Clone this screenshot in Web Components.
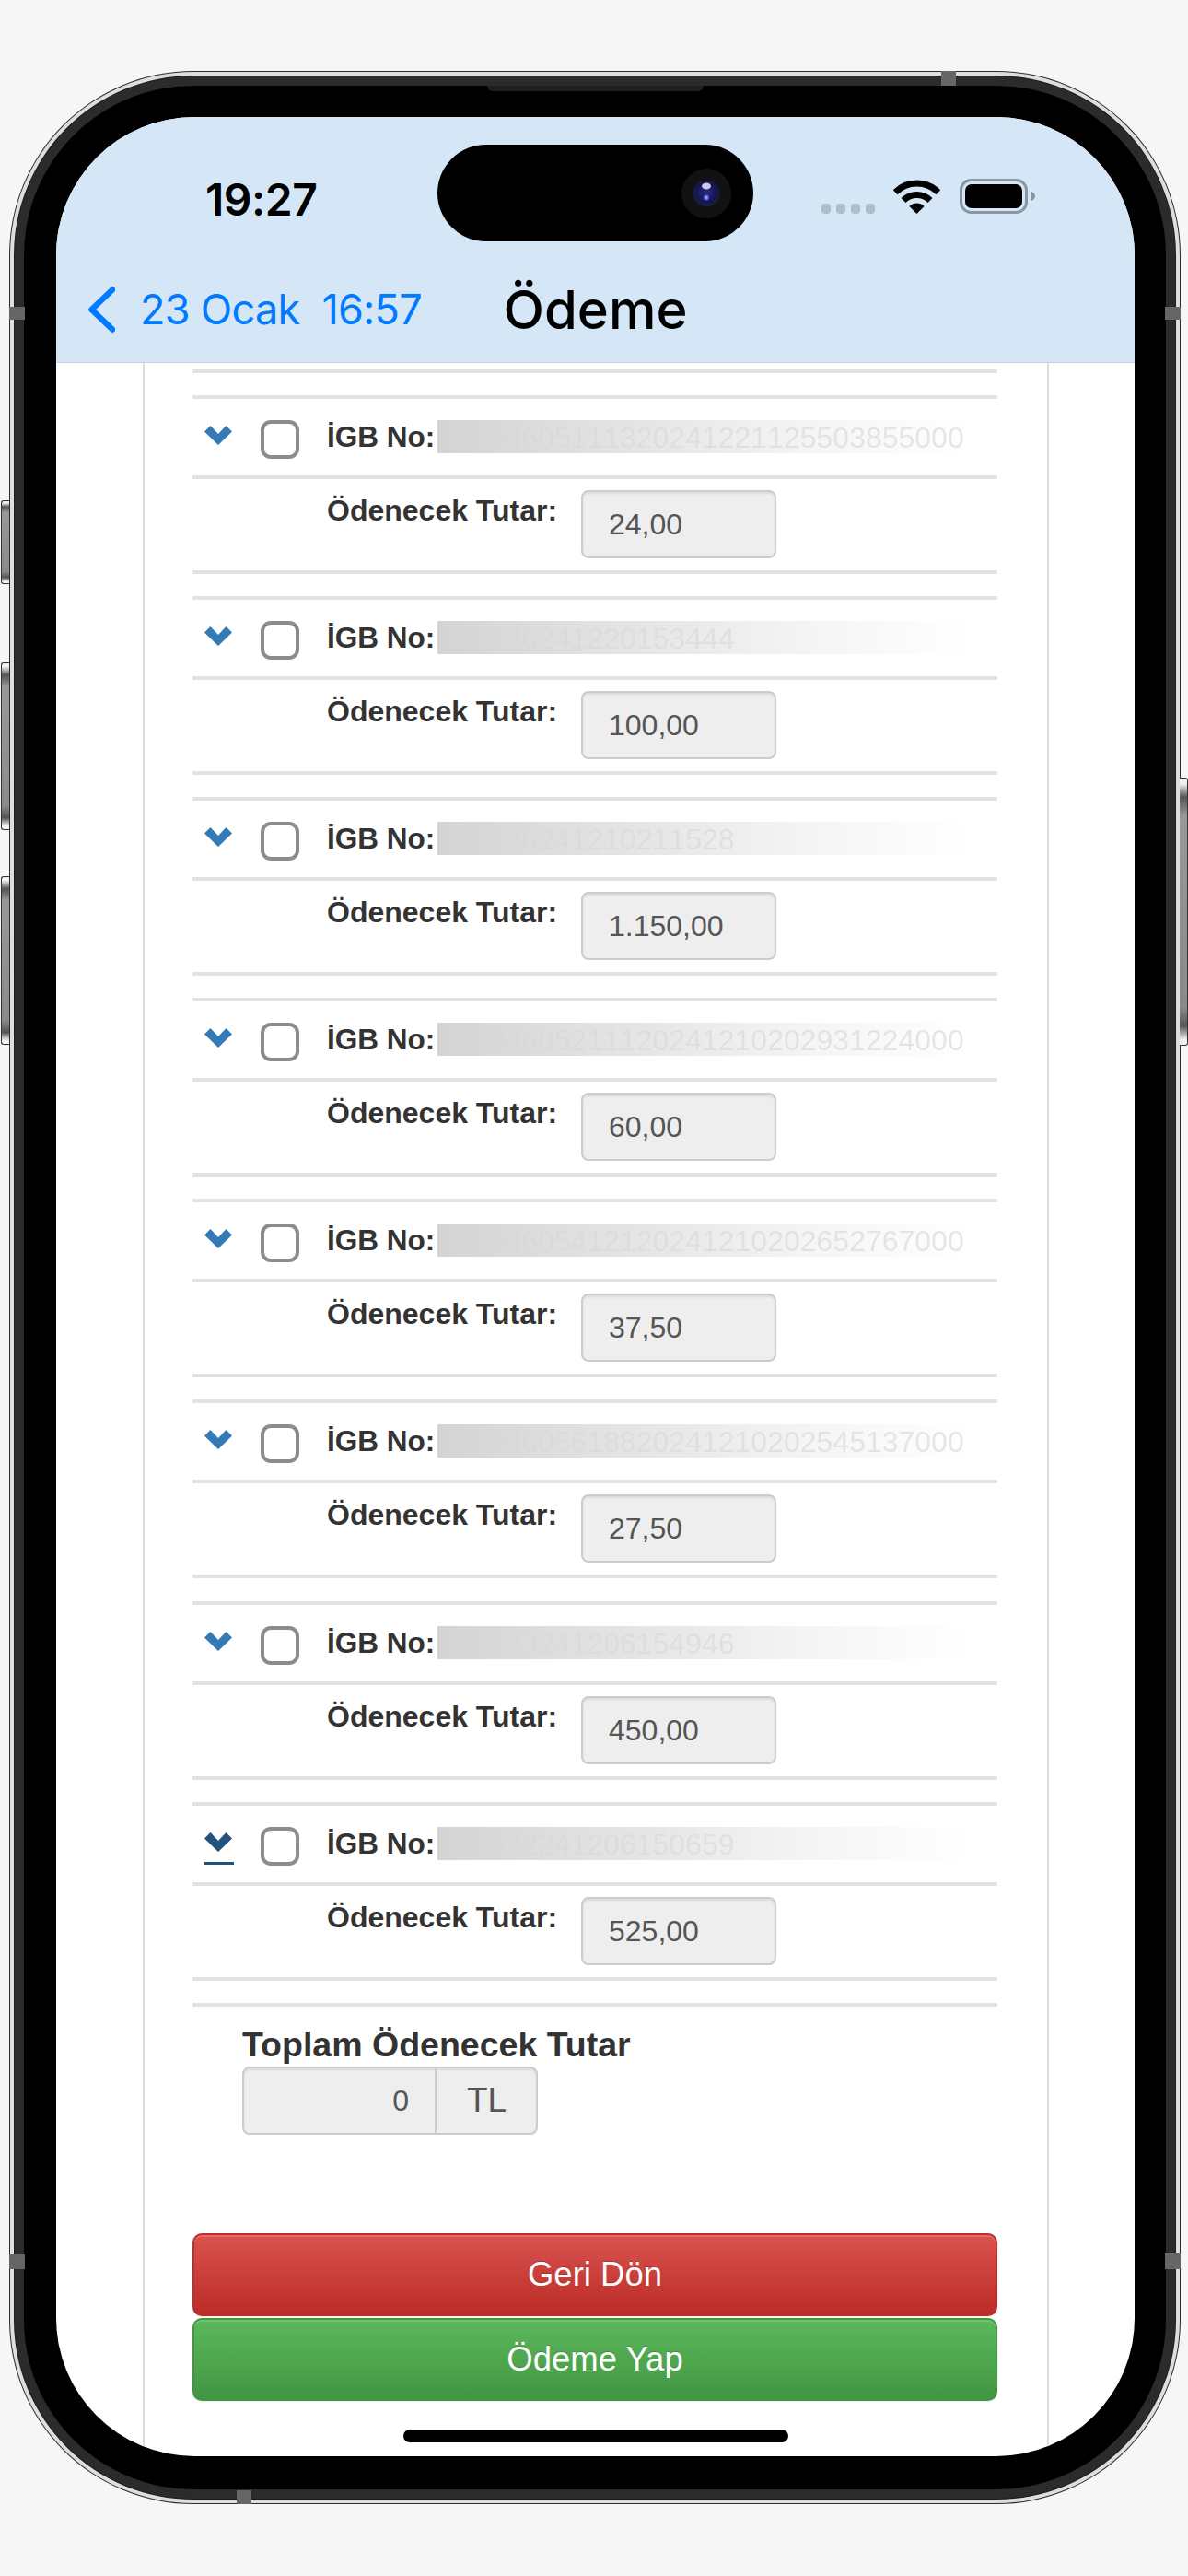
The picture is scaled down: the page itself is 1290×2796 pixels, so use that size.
<!DOCTYPE html>
<html lang="tr">
<head>
<meta charset="utf-8">
<title>Ödeme</title>
<style>
    html, body { margin: 0; padding: 0; background: #f6f6f6; }
    body { font-family: "Liberation Sans", Arial, sans-serif; }
</style>
</head>
<body>

<phone-frame>
    <status-bar slot="header" time="19:27"></status-bar>
    <nav-bar slot="header" back="23 Ocak  16:57" title="Ödeme"></nav-bar>
    <payment-sheet>
        <payment-row igb="0604605111320241221125503855000" amount="24,00"></payment-row>
        <payment-row igb="60126241220153444" amount="100,00"></payment-row>
        <payment-row igb="61426241210211528" amount="1.150,00"></payment-row>
        <payment-row igb="0604605211120241210202931224000" amount="60,00"></payment-row>
        <payment-row igb="0604605412120241210202652767000" amount="37,50"></payment-row>
        <payment-row igb="0604605618820241210202545137000" amount="27,50"></payment-row>
        <payment-row igb="60223241206154946" amount="450,00"></payment-row>
        <payment-row igb="60622241206150659" amount="525,00" active></payment-row>
        <total-box label="Toplam Ödenecek Tutar" value="0" unit="TL"></total-box>
        <action-button kind="danger">Geri Dön</action-button>
        <action-button kind="success">Ödeme Yap</action-button>
    </payment-sheet>
</phone-frame>

<script>
class phoneFrame extends HTMLElement
{
    constructor()
    {
        super();
        this.shadowDOM = this.attachShadow({mode:"open"});
    }

    connectedCallback()
    {
        this.render();
    }

    render()
    {
        this.shadowDOM.innerHTML =
        `
        <style>
            :host
            {
                display         : block;
                position        : relative;
                width           : 1272px;
                height          : 2641px;
                margin          : 77px 0 0 10px;
            }

            .outer
            {
                height          : 100%;
                box-sizing      : border-box;
                padding         : 1px;
                background      : #2c2c2c;
                border-radius   : 200px;
            }

            .silver
            {
                height          : 100%;
                box-sizing      : border-box;
                padding         : 5px;
                background      : #dedede;
                border-radius   : 199px;
            }

            .metal
            {
                height          : 100%;
                box-sizing      : border-box;
                padding         : 10px;
                background      : #2b2b2b;
                border-radius   : 194px;
                box-shadow      : 0 0 0 1px #1c1c1c;
            }

            .bezel
            {
                height          : 100%;
                box-sizing      : border-box;
                padding         : 34px 34px 36px 35px;
                background      : #000;
                border-radius   : 184px;
            }

            .screen
            {
                height          : 100%;
                position        : relative;
                display         : flex;
                flex-direction  : column;
                overflow        : hidden;
                background      : #fff;
                border-radius   : 150px;
            }

            .header
            {
                display         : block;
                flex            : none;
                height          : 267px;
                background      : #d5e6f6;
                border-bottom   : 1px solid #c3d0dc;
                box-sizing      : border-box;
            }

            .content
            {
                flex            : 1;
                min-height      : 0;
                overflow        : hidden;
            }

            .home
            {
                position        : absolute;
                left            : 377px;
                bottom          : 15px;
                width           : 418px;
                height          : 14px;
                background      : #000;
                border-radius   : 7px;
            }

            .side
            {
                position        : absolute;
                box-sizing      : border-box;
                width           : 9px;
                border          : 1px solid #333;
                background      : linear-gradient(180deg, #f0f0f0 0, #f0f0f0 2%, #555 7%, #999 14%, #8a8a8a 86%, #555 93%, #f0f0f0 98%, #f0f0f0 100%);
            }

            .side.left  { left: -9px; border-right: 0; border-radius: 3px 0 0 3px; }
            .side.right { right: -8px; border-left: 0; border-radius: 0 3px 3px 0; }

            .band
            {
                position        : absolute;
                background      : #666;
            }

            .speaker
            {
                position        : absolute;
                left            : 519px;
                top             : 16px;
                width           : 235px;
                height          : 6px;
                background      : #202020;
                border-radius   : 0 0 6px 6px;
            }
        </style>

        <div class="side left" style="top:466px;height:91px"></div>
        <div class="side left" style="top:642px;height:182px"></div>
        <div class="side left" style="top:874px;height:183px"></div>
        <div class="side right" style="top:767px;height:291px"></div>

        <div class="outer"><div class="silver"><div class="metal"><div class="bezel">
            <div class="screen">
                <div class="header"><slot name="header"></slot></div>
                <div class="content"><slot></slot></div>
                <div class="home"></div>
            </div>
        </div></div></div></div>

        <div class="speaker"></div>
        <div class="band" style="left:1012px;top:0;width:16px;height:16px"></div>
        <div class="band" style="left:0;top:256px;width:17px;height:14px"></div>
        <div class="band" style="right:0;top:256px;width:17px;height:14px"></div>
        <div class="band" style="left:0;top:2370px;width:17px;height:16px"></div>
        <div class="band" style="right:0;top:2368px;width:17px;height:18px"></div>
        <div class="band" style="left:247px;bottom:0;width:16px;height:15px"></div>
        `
    }
}

class statusBar extends HTMLElement
{
    constructor()
    {
        super();
        this.shadowDOM = this.attachShadow({mode:"open"});
    }

    connectedCallback()
    {
        this.render();
    }

    render()
    {
        this.shadowDOM.innerHTML =
        `
        <style>
            :host
            {
                display         : flex;
                position        : relative;
                justify-content : space-between;
                align-items     : flex-start;
                height          : 163px;
                box-sizing      : border-box;
                padding         : 0 108px 0 162px;
            }

            .time
            {
                margin-top      : 61px;
                font            : 600 48px/58px Inter, "Liberation Sans", sans-serif;
                letter-spacing  : -0.5px;
                color           : #000;
            }

            .icons
            {
                display         : flex;
                align-items     : flex-end;
                margin-top      : 67px;
            }

            .dots
            {
                display         : flex;
                gap             : 6px;
                margin-right    : 20px;
            }

            .dots i
            {
                width           : 10px;
                height          : 11px;
                background      : #aebdca;
                border-radius   : 4px;
            }

            .wifi
            {
                display         : block;
                margin-right    : 21px;
            }

            .battery
            {
                display         : block;
            }

            .island
            {
                position        : absolute;
                left            : 414px;
                top             : 30px;
                width           : 343px;
                height          : 105px;
                background      : #000;
                border-radius   : 53px;
            }

            .island svg
            {
                position        : absolute;
                left            : 264px;
                top             : 25px;
            }
        </style>

        <span class="time">${this.getAttribute("time")}</span>

        <div class="island">
            <svg width="56" height="56" viewBox="0 0 56 56">
                <defs>
                    <radialGradient id="lens" cx="50%" cy="45%" r="55%">
                        <stop offset="0" stop-color="#2a2a8c"/>
                        <stop offset="0.7" stop-color="#15154f"/>
                        <stop offset="1" stop-color="#1a2340"/>
                    </radialGradient>
                </defs>
                <circle cx="28" cy="28" r="27" fill="#101214"/>
                <ellipse cx="28" cy="28" rx="14.5" ry="14" fill="url(#lens)"/>
                <ellipse cx="28" cy="20" rx="5" ry="3.5" fill="#cfc6e8"/>
                <circle cx="28" cy="32.5" r="3" fill="#6a58d8"/>
                <circle cx="28" cy="32.5" r="1.4" fill="#58c8e0"/>
            </svg>
        </div>

        <div class="icons">
            <div class="dots"><i></i><i></i><i></i><i></i></div>
            <svg class="wifi" width="51" height="37" viewBox="0 0 51 37">
                <path d="M2.2 13.7A33 33 0 0 1 48.8 13.7" fill="none" stroke="#000" stroke-width="7"/>
                <path d="M11 22.5A20.5 20.5 0 0 1 40 22.5" fill="none" stroke="#000" stroke-width="7"/>
                <path d="M25.5 37L17.4 28.9A11.5 11.5 0 0 1 33.6 28.9Z" fill="#000"/>
            </svg>
            <svg class="battery" width="82" height="38" viewBox="0 0 82 38">
                <rect x="1.5" y="1.5" width="71" height="35" rx="11" fill="none" stroke="#8a96a2" stroke-width="3"/>
                <rect x="6" y="6" width="62" height="26" rx="7" fill="#000"/>
                <path d="M77 13.5C80 14.5 82 16.5 82 19C82 21.5 80 23.5 77 24.5Z" fill="#8a96a2"/>
            </svg>
        </div>
        `
    }
}

class navBar extends HTMLElement
{
    constructor()
    {
        super();
        this.shadowDOM = this.attachShadow({mode:"open"});
    }

    connectedCallback()
    {
        this.render();
    }

    render()
    {
        this.shadowDOM.innerHTML =
        `
        <style>
            :host
            {
                display         : grid;
                grid-template-columns : 1fr auto 1fr;
                align-items     : center;
                height          : 103px;
                box-sizing      : border-box;
                padding         : 0 35px 12px 35px;
                font-family     : Inter, "Liberation Sans", sans-serif;
            }

            .back
            {
                display         : flex;
                align-items     : center;
                gap             : 27px;
                color           : #007aff;
                font-size       : 45px;
                line-height     : 56px;
                white-space     : pre;
                letter-spacing  : -0.7px;
            }

            .back svg
            {
                display         : block;
                flex            : none;
            }

            .title
            {
                color           : #000;
                font-size       : 58px;
                font-weight     : 500;
                line-height     : 64px;
            }
        </style>

        <div class="back">
            <svg width="29" height="50" viewBox="0 0 29 50">
                <path d="M26 3.5L3.5 25L26 46.5" fill="none" stroke="#007aff" stroke-width="6.5" stroke-linecap="round" stroke-linejoin="round"/>
            </svg><span>${this.getAttribute("back")}</span>
        </div>
        <div class="title">${this.getAttribute("title")}</div>
        <div></div>
        `
    }
}

class paymentSheet extends HTMLElement
{
    constructor()
    {
        super();
        this.shadowDOM = this.attachShadow({mode:"open"});
    }

    connectedCallback()
    {
        this.render();
    }

    render()
    {
        this.shadowDOM.innerHTML =
        `
        <style>
            :host
            {
                display         : block;
                height          : 100%;
                box-sizing      : border-box;
                margin          : 0 93px 0 94px;
                padding         : 7px 54px 0 52px;
                border-left     : 2px solid #dedede;
                border-right    : 2px solid #dedede;
                color           : #333;
                font-family     : "Liberation Sans", Arial, sans-serif;
            }

            .line
            {
                height          : 4px;
                margin-bottom   : 24px;
                background      : #e2e2e2;
            }
        </style>

        <div class="line"></div>
        <slot></slot>
        `
    }
}

class paymentRow extends HTMLElement
{
    constructor()
    {
        super();
        this.shadowDOM = this.attachShadow({mode:"open"});
    }

    connectedCallback()
    {
        this.render();
    }

    render()
    {
        this.shadowDOM.innerHTML =
        `
        <style>
            :host
            {
                display         : block;
                margin-bottom   : 24.1px;
                border-top      : 4px solid #e2e2e2;
                border-bottom   : 4px solid #e2e2e2;
            }

            .head
            {
                display         : flex;
                align-items     : flex-start;
                height          : 87px;
                box-sizing      : border-box;
                padding         : 23px 0 0 13px;
                border-bottom   : 4px solid #e2e2e2;
            }

            .toggle
            {
                display         : block;
                flex            : none;
                width           : 32px;
                height          : 33px;
                margin-top      : 6px;
                margin-right    : 29px;
            }

            .toggle svg
            {
                display         : block;
                fill            : #337ab7;
            }

            :host([active]) .toggle
            {
                height          : 32px;
                border-bottom   : 3px solid #23527c;
            }

            :host([active]) .toggle svg
            {
                fill            : #23527c;
            }

            .box
            {
                flex            : none;
                box-sizing      : border-box;
                width           : 42px;
                height          : 42px;
                margin-right    : 30px;
                border          : 4px solid #8c8c8c;
                border-radius   : 11px;
                background      : #fff;
            }

            .name
            {
                flex            : none;
                width           : 120px;
                font-size       : 31.5px;
                font-weight     : bold;
                line-height     : 36px;
            }

            .igb
            {
                flex            : 1;
                margin-right    : 28px;
                height          : 36px;
                padding-left    : 20px;
                font-size       : 32px;
                font-kerning    : none;
                line-height     : 38px;
                background      : linear-gradient(90deg, #d4d4d4 0, #e6e6e6 40%, #f4f4f4 68%, #fff 100%);
                white-space     : nowrap;
                overflow        : hidden;
            }

            .igb span
            {
                display         : inline-block;
                width           : 560px;
                color           : transparent;
                background      : linear-gradient(90deg, #d6d6d6 0, #dedede 40%, #e6e6e6 100%);
                -webkit-background-clip : text;
                background-clip : text;
            }

            .body
            {
                display         : flex;
                align-items     : flex-start;
                height          : 99px;
                box-sizing      : border-box;
                padding         : 12px 0 0 146px;
            }

            .label
            {
                width           : 276px;
                font-size       : 32px;
                font-weight     : bold;
                line-height     : 36px;
                margin-top      : 4px;
            }

            .amount
            {
                box-sizing      : border-box;
                width           : 212px;
                height          : 74px;
                padding-left    : 28px;
                border          : 2px solid #ccc;
                border-radius   : 8px;
                background      : #eee;
                box-shadow      : inset 0 2px 2px rgba(0,0,0,.075);
                color           : #555;
                font-size       : 32px;
                line-height     : 70px;
            }
        </style>

        <div class="head">
            <div class="toggle">
                <svg width="30" height="21" viewBox="0 0 30 21"><path d="M0 6.5L6.5 0L15 9L23.5 0L30 6.5L15 21Z"/></svg>
            </div>
            <div class="box"></div>
            <div class="name">İGB No:</div>
            <div class="igb"><span>${this.getAttribute("igb")}</span></div>
        </div>
        <div class="body">
            <div class="label">Ödenecek Tutar:</div>
            <div class="amount">${this.getAttribute("amount")}</div>
        </div>
        `
    }
}

class totalBox extends HTMLElement
{
    constructor()
    {
        super();
        this.shadowDOM = this.attachShadow({mode:"open"});
    }

    connectedCallback()
    {
        this.render();
    }

    render()
    {
        this.shadowDOM.innerHTML =
        `
        <style>
            :host
            {
                display         : block;
                height          : 250px;
                box-sizing      : border-box;
                padding         : 17px 0 0 54px;
                border-top      : 4px solid #e2e2e2;
            }

            .label
            {
                font-size       : 37.5px;
                font-weight     : bold;
                line-height     : 48px;
            }

            .group
            {
                display         : flex;
                width           : 321px;
                height          : 74px;
                box-sizing      : border-box;
                border          : 2px solid #ccc;
                border-radius   : 8px;
                background      : #eee;
                box-shadow      : inset 0 2px 2px rgba(0,0,0,.075);
                color           : #555;
            }

            .value
            {
                flex            : 1;
                padding-right   : 28px;
                text-align      : right;
                font-size       : 32px;
                line-height     : 70px;
                border-right    : 2px solid #ccc;
            }

            .unit
            {
                width           : 108px;
                box-sizing      : border-box;
                padding-left    : 33px;
                font-size       : 37px;
                line-height     : 70px;
            }
        </style>

        <div class="label">${this.getAttribute("label")}</div>
        <div class="group">
            <div class="value">${this.getAttribute("value")}</div>
            <div class="unit">${this.getAttribute("unit")}</div>
        </div>
        `
    }
}

class actionButton extends HTMLElement
{
    constructor()
    {
        super();
        this.shadowDOM = this.attachShadow({mode:"open"});
    }

    connectedCallback()
    {
        this.render();
    }

    render()
    {
        this.shadowDOM.innerHTML =
        `
        <style>
            :host
            {
                display         : block;
                margin-bottom   : 2px;
            }

            button
            {
                display         : block;
                width           : 100%;
                height          : 90px;
                padding         : 0;
                border          : 2px solid;
                border-radius   : 10px;
                color           : #fff;
                font            : 36.5px "Liberation Sans", Arial, sans-serif;
                text-shadow     : 0 -1px 0 rgba(0,0,0,.2);
                box-shadow      : inset 0 2px 0 rgba(255,255,255,.15), 0 1px 2px rgba(0,0,0,.08);
            }

            :host([kind="danger"]) button
            {
                background      : linear-gradient(180deg, #d9534f 0, #bc2b27 100%);
                border-color    : #bf2f2a;
            }

            :host([kind="success"]) button
            {
                background      : linear-gradient(180deg, #5cb85c 0, #419641 100%);
                border-color    : #419641;
            }
        </style>

        <button type="button"><slot></slot></button>
        `
    }
}

customElements.get('phone-frame')    || customElements.define('phone-frame',phoneFrame);
customElements.get('status-bar')     || customElements.define('status-bar',statusBar);
customElements.get('nav-bar')        || customElements.define('nav-bar',navBar);
customElements.get('payment-sheet')  || customElements.define('payment-sheet',paymentSheet);
customElements.get('payment-row')    || customElements.define('payment-row',paymentRow);
customElements.get('total-box')      || customElements.define('total-box',totalBox);
customElements.get('action-button')  || customElements.define('action-button',actionButton);
</script>
</body>
</html>
